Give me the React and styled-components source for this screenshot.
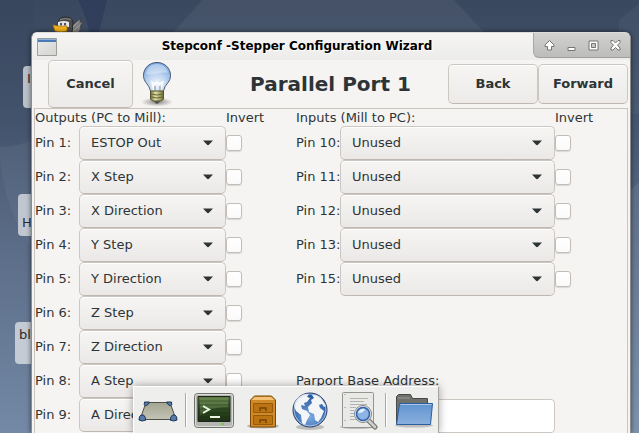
import React from "react";
import styled, { createGlobalStyle } from "styled-components";

const outputs = [
  { pin: 1, value: "ESTOP Out" },
  { pin: 2, value: "X Step" },
  { pin: 3, value: "X Direction" },
  { pin: 4, value: "Y Step" },
  { pin: 5, value: "Y Direction" },
  { pin: 6, value: "Z Step" },
  { pin: 7, value: "Z Direction" },
  { pin: 8, value: "A Step" },
  { pin: 9, value: "A Direction" },
];

const inputs = [10, 11, 12, 13, 15].map((pin) => ({ pin, value: "Unused" }));

const outputSignals = outputs.map((o) => o.value).concat("Unused");
const inputSignals = ["Unused", "ESTOP In", "Probe In"];

const GlobalStyle = createGlobalStyle`
  * {
    box-sizing: border-box;
  }
  body {
    margin: 0;
    background: #5b6d88;
    color: #2e3436;
    font-family: "DejaVu Sans", sans-serif;
    font-size: 13px;
    line-height: 17px;
  }
  button, select, input {
    font: inherit;
    color: inherit;
    margin: 0;
  }
`;

const Desktop = styled.main`
  position: relative;
  min-height: 100vh;
  overflow: hidden;
  padding: 32px 8px 0 31px;
`;

const Backdrop = styled.svg`
  position: absolute;
  inset: 0;
  width: 100%;
  height: 100%;
`;

const DesktopLabel = styled.span`
  position: absolute;
  top: ${(p) => p.$top}px;
  left: ${(p) => p.$left}px;
  width: 60px;
  height: 42px;
  padding: ${(p) => (p.$second ? "20px" : "4px")} 4px 0;
  border-radius: 4px;
  background: rgba(226, 229, 233, 0.75);
  color: #2c2c2c;
`;

const Duck = styled.svg`
  position: absolute;
  top: 15px;
  left: 52px;
  width: 32px;
  height: 24px;
`;

const Window = styled.section`
  position: relative;
  display: flex;
  flex-direction: column;
  min-height: calc(100vh - 32px);
  border: 1px solid #8c8d8b;
  border-top-color: #dcdcda;
  border-bottom: 0;
  border-radius: 6px 6px 0 0;
  background: #f5f4f2;
  box-shadow: 0 0 5px rgba(0, 0, 0, 0.55);
`;

const TitleBar = styled.header`
  display: flex;
  align-items: center;
  height: 27px;
  padding-left: 5px;
  border-radius: 6px 6px 0 0;
  background: linear-gradient(#f6f5f4, #ececeb);
`;

const Title = styled.span`
  flex: 1;
  padding-left: 4px;
  text-align: center;
  font-size: 12px;
  font-weight: bold;
  color: #000;
  text-shadow: 1px 1px 0 #fff;
`;

const WindowButtons = styled.div`
  display: flex;
  align-self: flex-start;
  height: 25px;
  padding: 0 4px;
  border-radius: 0 5px 0 6px;
  border-left: 1px solid #a9a9a7;
  border-bottom: 1px solid #a0a09e;
  background: linear-gradient(#d2d2d1, #bcbcba);
`;

const WindowButton = styled.button`
  width: 22px;
  height: 25px;
  padding: 0;
  border: 0;
  background: none;

  svg {
    display: block;
    margin: 5px auto;
  }
`;

const ActionBar = styled.div`
  display: flex;
  align-items: center;
  height: 48px;
  padding: 0 2px 0 16px;
`;

const ActionButton = styled.button`
  width: ${(p) => (p.$tall ? 85 : 90)}px;
  height: ${(p) => (p.$tall ? 48 : 40)}px;
  padding: 0 0 2px;
  border: 1px solid #cdc7c2;
  border-bottom-color: #bfb8b1;
  border-radius: 5px;
  background: linear-gradient(#f6f5f4, #edebe9);
  box-shadow: inset 0 1px #fff;
  font-weight: bold;
`;

const Bulb = styled.svg`
  width: 32px;
  height: 48px;
  margin-left: 8px;
`;

const Heading = styled.h1`
  flex: 1;
  margin: 0;
  padding-left: 40px;
  text-align: center;
  font-size: 20px;
  line-height: 24px;
`;

const Page = styled.form`
  flex: 1;
  display: grid;
  grid-template-columns: 231fr 299fr;
  column-gap: 30px;
  margin: 0 2px;
  padding-right: 32px;
  border: 1px solid #c9c4bd;
  border-bottom: 0;
`;

const PinGroup = styled.div`
  display: flex;
  flex-direction: column;
`;

const GroupHeader = styled.div`
  display: grid;
  grid-template-columns: 1fr 40px;
  white-space: nowrap;
`;

const PinRow = styled.div`
  display: grid;
  grid-template-columns: 44px 1fr 40px;
  align-items: center;
  height: 34px;
  white-space: nowrap;

  label {
    padding-bottom: 2px;
  }
`;

const Combo = styled.div`
  display: grid;
  align-items: center;

  select, svg {
    grid-area: 1 / 1;
  }
  svg {
    justify-self: end;
    margin-right: 13px;
    pointer-events: none;
  }
`;

const Select = styled.select`
  appearance: none;
  width: 100%;
  height: 34px;
  padding: 0 32px 2px 11px;
  border: 1px solid #cdc7c2;
  border-bottom-color: #bfb8b1;
  border-radius: 5px;
  background: linear-gradient(#f6f5f4, #ebe9e7);
  box-shadow: inset 0 1px #fff;
`;

const Check = styled.input`
  appearance: none;
  width: 16px;
  height: 16px;
  border: 1px solid #c4bdb6;
  border-radius: 3px;
  background: linear-gradient(#fff, #fafafa);
  box-shadow: 0 1px 1px rgba(0, 0, 0, 0.12);

  &:checked {
    background: #3584e4;
  }
`;

const AddressField = styled.div`
  display: flex;
  flex-direction: column;
  margin: auto 40px 0 0;

  label {
    padding-bottom: 10px;
  }
  input {
    height: 34px;
    padding: 0 8px;
    border: 1px solid #cdc7c2;
    border-radius: 4px;
    background: #fff;
  }
`;

const Dock = styled.nav`
  position: absolute;
  bottom: 0;
  left: 133px;
  display: flex;
  align-items: center;
  height: 47px;
  border: solid;
  border-width: 1px 1px 0;
  border-color: #fff #a3a39f #fff #fff;
  background: #eeeeec;
  box-shadow: 0 0 8px rgba(0, 0, 0, 0.35);
`;

const DockButton = styled.button`
  display: flex;
  width: 40px;
  height: 40px;
  padding: 0;
  margin: 0 4px;
  border: 0;
  background: none;
`;

const DockDivider = styled.span`
  width: 2px;
  height: 34px;
  margin: 0 3px;
  border-left: 1px solid #a9a9a5;
  border-right: 1px solid #fff;
`;

const Arrow = () => (
  <svg width="10" height="6" viewBox="0 0 10 6" aria-hidden="true">
    <path d="M0 .5h10L6.2 4.6Q5 5.8 3.8 4.6z" fill="#2e3436" />
  </svg>
);

const PinField = ({ pin, value, signals }) => (
  <PinRow>
    <label htmlFor={`pin-${pin}`}>Pin {pin}:</label>
    <Combo>
      <Select id={`pin-${pin}`} defaultValue={value}>
        {signals.map((s) => (
          <option key={s}>{s}</option>
        ))}
      </Select>
      <Arrow />
    </Combo>
    <Check type="checkbox" aria-label={`Invert pin ${pin}`} />
  </PinRow>
);

const Wallpaper = () => (
  <Backdrop viewBox="0 0 639 433" preserveAspectRatio="none" aria-hidden="true">
    <defs>
      <linearGradient id="sky" x1="0" y1="0" x2="0" y2="1">
        <stop offset="0" stopColor="#3a485f" />
        <stop offset=".25" stopColor="#44546d" />
        <stop offset=".55" stopColor="#5a6b86" />
        <stop offset="1" stopColor="#7389a5" />
      </linearGradient>
    </defs>
    <path d="M0 0h639v433H0z" fill="url(#sky)" />
    <path d="M78 0h29L97 40H90Q88 18 78 0z" fill="#2c3b5a" opacity=".7" />
    <path d="M202 0h252l32 34H172z" fill="#fff" opacity=".05" />
    <path d="M639 4v110h-20V20z" fill="#fff" opacity=".04" />
    <path d="M639 182l-20 20v231h20z" fill="#fff" opacity=".08" />
    <path d="M0 0V147Q20 146 34 136V0z" fill="#1b2c4c" opacity=".06" />
    <path d="M0 160Q6 215 34 250V140Q20 146 0 147z" fill="#fff" opacity=".04" />
  </Backdrop>
);

const WindowIcon = () => (
  <svg width="20" height="18" viewBox="0 0 20 18" aria-hidden="true">
    <defs>
      <linearGradient id="pane" x1="0" y1="0" x2="1" y2="1">
        <stop offset="0" stopColor="#e9eae8" />
        <stop offset="1" stopColor="#d3d5d1" />
      </linearGradient>
    </defs>
    <path d="M.5.5h19v17H.5z" fill="url(#pane)" stroke="#9c9e9a" />
    <path d="M1 1h18v3H1z" fill="#4a7ab8" />
    <path d="M1 1h18v1H1z" fill="#8fb0d8" />
  </svg>
);

const controls = [
  { name: "Shade", d: "M7.500 2.500L12 7v1.500H9.500V12h-4V8.500H3V7z" },
  { name: "Minimize", d: "M4 9.500h7v3H4z" },
  { name: "Maximize", d: "M3 3h9v9H3zM5.500 5.500v4h4v-4z" },
  {
    name: "Close",
    d: "M3 2.500h2L7.500 5 10 2.500h2v2L9.500 7.200 12 10v2h-2L7.500 9.500 5 12H3v-2L5.500 7.200 3 4.500z",
  },
];

const BulbIcon = () => (
  <Bulb viewBox="0 0 32 48" aria-hidden="true">
    <defs>
      <radialGradient id="glass" cx=".5" cy=".75" r=".8">
        <stop offset="0" stopColor="#f2f7fd" />
        <stop offset=".45" stopColor="#bdd4f0" />
        <stop offset="1" stopColor="#6c9edb" />
      </radialGradient>
      <radialGradient id="shade">
        <stop offset="0" stopColor="#000" stopOpacity=".45" />
        <stop offset="1" stopColor="#000" stopOpacity="0" />
      </radialGradient>
      <linearGradient id="brass">
        <stop offset="0" stopColor="#77743a" />
        <stop offset=".4" stopColor="#e4e2a8" />
        <stop offset="1" stopColor="#6d6a33" />
      </linearGradient>
    </defs>
    <ellipse cx="16" cy="42" rx="16" ry="4.500" fill="url(#shade)" />
    <path
      d="M16 2.500C8 2.500 2.500 8.500 2.500 15.500c0 6 4.500 8.500 6 12.500.8 2.500 1 4 2.500 4h10c1.500 0 1.700-1.500 2.500-4 1.500-4 6-6.500 6-12.500C29.500 8.500 24 2.500 16 2.500z"
      fill="url(#glass)"
      stroke="#49566f"
    />
    <path d="M5 14C6 7 11 4 16 4s10 3 11 9c-7-2-14 3-22 1z" fill="#fff" opacity=".35" />
    <path d="M13 31l-2-9 3 2 2-2 2 2 4-2-3 9" fill="none" stroke="#fff" strokeWidth="1.500" />
    <path d="M14 31v-5m5 5v-5" stroke="#8a8c78" />
    <path d="M9.500 31h13v8q-1 2-3 2h-7q-2 0-3-2z" fill="url(#brass)" stroke="#55532d" />
    <path d="M10 34q6 2 12 0M10 37q6 2 12 0" fill="none" stroke="#66643a" />
    <path d="M13 41h6q-1 3-3 3t-3-3z" fill="#555753" />
  </Bulb>
);

const DuckIcon = () => (
  <Duck viewBox="0 0 32 24" aria-hidden="true">
    <path d="M17 13L29 3l-1 4 3 0-3 5 1 1-4 8H16z" fill="#7c7c7c" stroke="#3c3c3c" strokeWidth=".8" />
    <path d="M20 13l7-7M21 16l7-6" stroke="#a9a9a9" strokeWidth=".8" />
    <path d="M6 9Q6 2 13 2q7 0 8 5l-1 11H7z" fill="#4c4c4c" stroke="#2b2b2b" />
    <path d="M8 4.500q6-2 11 0" fill="none" stroke="#8a8a8a" />
    <path d="M6 7q6-2 11 0v5H6z" fill="#dfe4ea" />
    <path d="M9 8v2.500m4-2.500v2.500" stroke="#222" strokeWidth="1.500" />
    <path d="M1 10q7 2 14 1v5q-7 2-12 0z" fill="#f2b21b" stroke="#a96d05" strokeWidth=".7" />
  </Duck>
);

const ShowDesktopIcon = () => (
  <svg width="40" height="40" viewBox="0 0 40 40">
    <defs>
      <linearGradient id="desk" x1="0" y1="0" x2="0" y2="1">
        <stop offset="0" stopColor="#a3a491" />
        <stop offset="1" stopColor="#c3c4b4" />
      </linearGradient>
    </defs>
    <path d="M8 12.500h24l6 17H2z" fill="url(#desk)" stroke="#4e5047" />
    <g fill="#5579ab" stroke="#1d3557">
      <path d="M6.500 12h5l-1 2-3 2q-2-1-1-4zM28.500 12h5q1 3-1 4l-3-2z" />
      <path d="M3 25q3-1 4 2l1 3q-4 2-7 0 0-4 2-5zM37 25q-3-1-4 2l-1 3q4 2 7 0 0-4-2-5z" />
    </g>
  </svg>
);

const TerminalIcon = () => (
  <svg width="40" height="40" viewBox="0 0 40 40">
    <defs>
      <linearGradient id="screen" x1="0" y1="0" x2="0" y2="1">
        <stop offset="0" stopColor="#5d7a41" />
        <stop offset=".5" stopColor="#2f4a22" />
        <stop offset="1" stopColor="#1c3013" />
      </linearGradient>
    </defs>
    <rect x=".5" y="3.500" width="39" height="34" rx="3" fill="#b4b6b1" stroke="#70726e" />
    <rect x="1.500" y="4.500" width="37" height="32" rx="2" fill="none" stroke="#dcdedb" />
    <path d="M4 6.500h32v25H4z" fill="url(#screen)" stroke="#20241e" />
    <path d="M6 8h28v9Q20 16 6 25z" fill="#9dba7e" opacity=".25" />
    <path d="M5 11h30M5 15h30M5 19h30M5 23h30M5 27h30" stroke="#142a0e" opacity=".4" />
    <path d="M9 16l6 3.500L9 23M16 27h10" fill="none" stroke="#eaf6e0" strokeWidth="2" />
    <path d="M27 34h3" stroke="#72d02c" strokeWidth="2" />
  </svg>
);

const CabinetIcon = () => (
  <svg width="40" height="40" viewBox="0 0 40 40">
    <ellipse cx="21" cy="36" rx="16" ry="2.500" opacity=".22" />
    <path d="M8.500 37V10l4-4h17l4 4v27z" fill="#d08a28" stroke="#7a4a06" />
    <path d="M9.500 10l3.500-3h16l3.500 3z" fill="#f3c277" />
    <path d="M11.500 13.500h19v9h-19zM11.500 25.500h19v9h-19z" fill="#bc7412" stroke="#955b08" />
    <path d="M18 21v-3h6v3M18 33v-3h6v3" fill="none" stroke="#754403" strokeWidth="1.500" />
  </svg>
);

const GlobeIcon = () => (
  <svg width="40" height="40" viewBox="0 0 40 40">
    <defs>
      <radialGradient id="sea" cx=".5" cy=".7" r=".65">
        <stop offset="0" stopColor="#7da9df" />
        <stop offset="1" stopColor="#1f559e" />
      </radialGradient>
    </defs>
    <ellipse cx="20" cy="37" rx="14" ry="3" opacity=".2" />
    <circle cx="20" cy="20" r="17" fill="url(#sea)" stroke="#2e3e68" />
    <g fill="#f3f5f6">
      <path d="M9 7q5-4 10-3l-2 3 3 1-3 4-3 1 1 3-4-1 1 4 5 2 3 4-3 5-2 5-3-2-1-8-5-4-2-5q1-6 5-9z" />
      <path d="M22 5q6-1 10 4l4 7-2 1-2-3-3 1 1 3 4 3-3 7-3 4-3-2-1-6-5-2-1-5 4-4-1-3 3-2z" />
    </g>
    <circle cx="20" cy="20" r="16" fill="none" stroke="#bcd3ef" opacity=".8" />
  </svg>
);

const SearchIcon = () => (
  <svg width="40" height="40" viewBox="0 0 40 40">
    <ellipse cx="19" cy="37" rx="17" ry="2" opacity=".2" />
    <rect x="4.500" y="2.500" width="31" height="35" rx="1" fill="#e9eae8" stroke="#93958f" />
    <path d="M7 4v32" stroke="#bbb" strokeDasharray="1 12" strokeWidth="2" />
    <path
      d="M12 8.500h18M12 11.500h14M12 14.500h17M12 17.500h6M12 20.500h4M12 23.500h4M12 26.500h4M12 29.500h7"
      stroke="#b1b3ae"
    />
    <path d="M30 30l7 7" stroke="#777974" strokeWidth="5" strokeLinecap="round" />
    <path d="M30 30l7 7" stroke="#cfd1cd" strokeWidth="2.500" strokeLinecap="round" />
    <circle cx="25" cy="24" r="8.500" fill="#eee" stroke="#83858a" />
    <circle cx="25" cy="24" r="6.500" fill="#8db4e4" stroke="#2f62a8" strokeWidth="1.500" />
    <path d="M20 23q2-5 7-4-1 4-7 4z" fill="#e6f0fb" />
  </svg>
);

const FolderIcon = () => (
  <svg width="40" height="40" viewBox="0 0 40 40">
    <defs>
      <linearGradient id="folder" x1="0" y1="0" x2="0" y2="1">
        <stop offset="0" stopColor="#5f93cf" />
        <stop offset="1" stopColor="#8bb0de" />
      </linearGradient>
    </defs>
    <ellipse cx="20" cy="35.500" rx="19" ry="2" opacity=".2" />
    <path d="M2.500 34V6.500l2-2h12l2 4h15V34z" fill="#6f716d" stroke="#484a47" />
    <path d="M4 8h12" stroke="#999b97" />
    <path d="M5.500 13.500h33l-2 21H2.500z" fill="url(#folder)" stroke="#2c5d9e" />
    <path d="M6.500 14.500h31" stroke="#a9c7ea" />
  </svg>
);

const DockItem = ({ name, children }) => (
  <DockButton type="button" aria-label={name}>
    {children}
  </DockButton>
);

export default function App() {
  return (
    <>
      <GlobalStyle />
      <Desktop>
        <Wallpaper />
        <DuckIcon />
        <DesktopLabel $top={66} $left={23}>I</DesktopLabel>
        <DesktopLabel $top={194} $left={18} $second>H</DesktopLabel>
        <DesktopLabel $top={322} $left={15}>bl</DesktopLabel>

        <Window>
          <TitleBar>
            <WindowIcon />
            <Title>Stepconf -Stepper Configuration Wizard</Title>
            <WindowButtons>
              {controls.map((c) => (
                <WindowButton key={c.name} type="button" aria-label={c.name}>
                  <svg width="15" height="15" viewBox="0 0 15 15">
                    <path d={c.d} fill="#fff" fillRule="evenodd" stroke="#757573" />
                  </svg>
                </WindowButton>
              ))}
            </WindowButtons>
          </TitleBar>

          <ActionBar>
            <ActionButton type="button" $tall>Cancel</ActionButton>
            <BulbIcon />
            <Heading>Parallel Port 1</Heading>
            <ActionButton type="button">Back</ActionButton>
            <ActionButton type="button">Forward</ActionButton>
          </ActionBar>

          <Page>
            <PinGroup>
              <GroupHeader>
                <span>Outputs (PC to Mill):</span>
                <span>Invert</span>
              </GroupHeader>
              {outputs.map((o) => (
                <PinField key={o.pin} {...o} signals={outputSignals} />
              ))}
            </PinGroup>
            <PinGroup>
              <GroupHeader>
                <span>Inputs (Mill to PC):</span>
                <span>Invert</span>
              </GroupHeader>
              {inputs.map((i) => (
                <PinField key={i.pin} {...i} signals={inputSignals} />
              ))}
              <AddressField>
                <label htmlFor="parport">Parport Base Address:</label>
                <input id="parport" type="text" />
              </AddressField>
            </PinGroup>
          </Page>
        </Window>

        <Dock>
          <DockItem name="Show desktop"><ShowDesktopIcon /></DockItem>
          <DockDivider />
          <DockItem name="Terminal"><TerminalIcon /></DockItem>
          <DockItem name="File manager"><CabinetIcon /></DockItem>
          <DockItem name="Web browser"><GlobeIcon /></DockItem>
          <DockItem name="Application finder"><SearchIcon /></DockItem>
          <DockDivider />
          <DockItem name="Home folder"><FolderIcon /></DockItem>
        </Dock>
      </Desktop>
    </>
  );
}
